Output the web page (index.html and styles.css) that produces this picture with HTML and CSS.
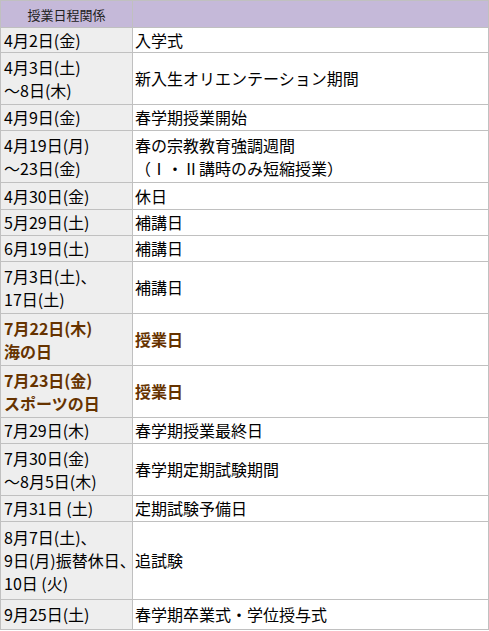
FILE: index.html
```html
<!DOCTYPE html>
<html lang="ja">
<head>
<meta charset="utf-8">
<title>授業日程関係</title>
<link rel="stylesheet" href="styles.css">
</head>
<body>
<table class="schedule">
  <colgroup><col class="c-date"><col class="c-event"></colgroup>
  <thead>
    <tr class="h-head"><th>授業日程関係</th><th></th></tr>
  </thead>
  <tbody>
    <tr class="h24"><td class="date">4月2日(金)</td><td>入学式</td></tr>
    <tr class="h51"><td class="date">4月3日(土)<br>～8日(木)</td><td>新入生オリエンテーション期間</td></tr>
    <tr class="h25"><td class="date">4月9日(金)</td><td>春学期授業開始</td></tr>
    <tr class="h51"><td class="date">4月19日(月)<br>～23日(金)</td><td>春の宗教教育強調週間<br>（Ⅰ・Ⅱ講時のみ短縮授業）</td></tr>
    <tr class="h26"><td class="date">4月30日(金)</td><td>休日</td></tr>
    <tr class="h25"><td class="date">5月29日(土)</td><td>補講日</td></tr>
    <tr class="h25"><td class="date">6月19日(土)</td><td>補講日</td></tr>
    <tr class="h51"><td class="date">7月3日(土)、<br>17日(土)</td><td>補講日</td></tr>
    <tr class="h51 special"><td class="date">7月22日(木)<br>海の日</td><td>授業日</td></tr>
    <tr class="h51 special"><td class="date">7月23日(金)<br>スポーツの日</td><td>授業日</td></tr>
    <tr class="h25"><td class="date">7月29日(木)</td><td>春学期授業最終日</td></tr>
    <tr class="h51"><td class="date">7月30日(金)<br>～8月5日(木)</td><td>春学期定期試験期間</td></tr>
    <tr class="h25"><td class="date">7月31日 (土)</td><td>定期試験予備日</td></tr>
    <tr class="h77"><td class="date">8月7日(土)、<br>9日(月)振替休日、<br>10日 (火)</td><td>追試験</td></tr>
    <tr class="h29"><td class="date">9月25日(土)</td><td>春学期卒業式・学位授与式</td></tr>
  </tbody>
</table>
</body>
</html>
```

FILE: styles.css
```css
html, body {
  margin: 0;
  padding: 0;
  background: #ffffff;
}

.schedule {
  border-collapse: collapse;
  table-layout: fixed;
  width: 488px;
  font-family: "Noto Sans CJK JP", "Noto Sans", sans-serif;
  font-size: 16px;
  line-height: 23px;
  color: #000000;
}

.c-date { width: 132px; }
.c-event { width: 356px; }

.schedule th,
.schedule td {
  border: 1px solid #c0c0c0;
  padding: 0 2px 0 3px;
  vertical-align: middle;
  text-align: left;
  white-space: nowrap;
  box-sizing: border-box;
}

.schedule th {
  background: #c5b9d9;
  font-weight: normal;
  font-size: 13px;
  line-height: 19px;
  color: #222222;
  text-align: center;
  height: 27px;
  padding: 0;
}

.schedule .date {
  background: #eeeeee;
}

.schedule td:not(.date) {
  padding-left: 2px;
}

.special td {
  color: #663300;
  font-weight: bold;
}

.h24 td { height: 25px; }
.h25 td { height: 26px; }
.h26 td { height: 27px; }
.h29 td { height: 30px; }
.h51 td { height: 52px; }
.h77 td { height: 78px; }
```
